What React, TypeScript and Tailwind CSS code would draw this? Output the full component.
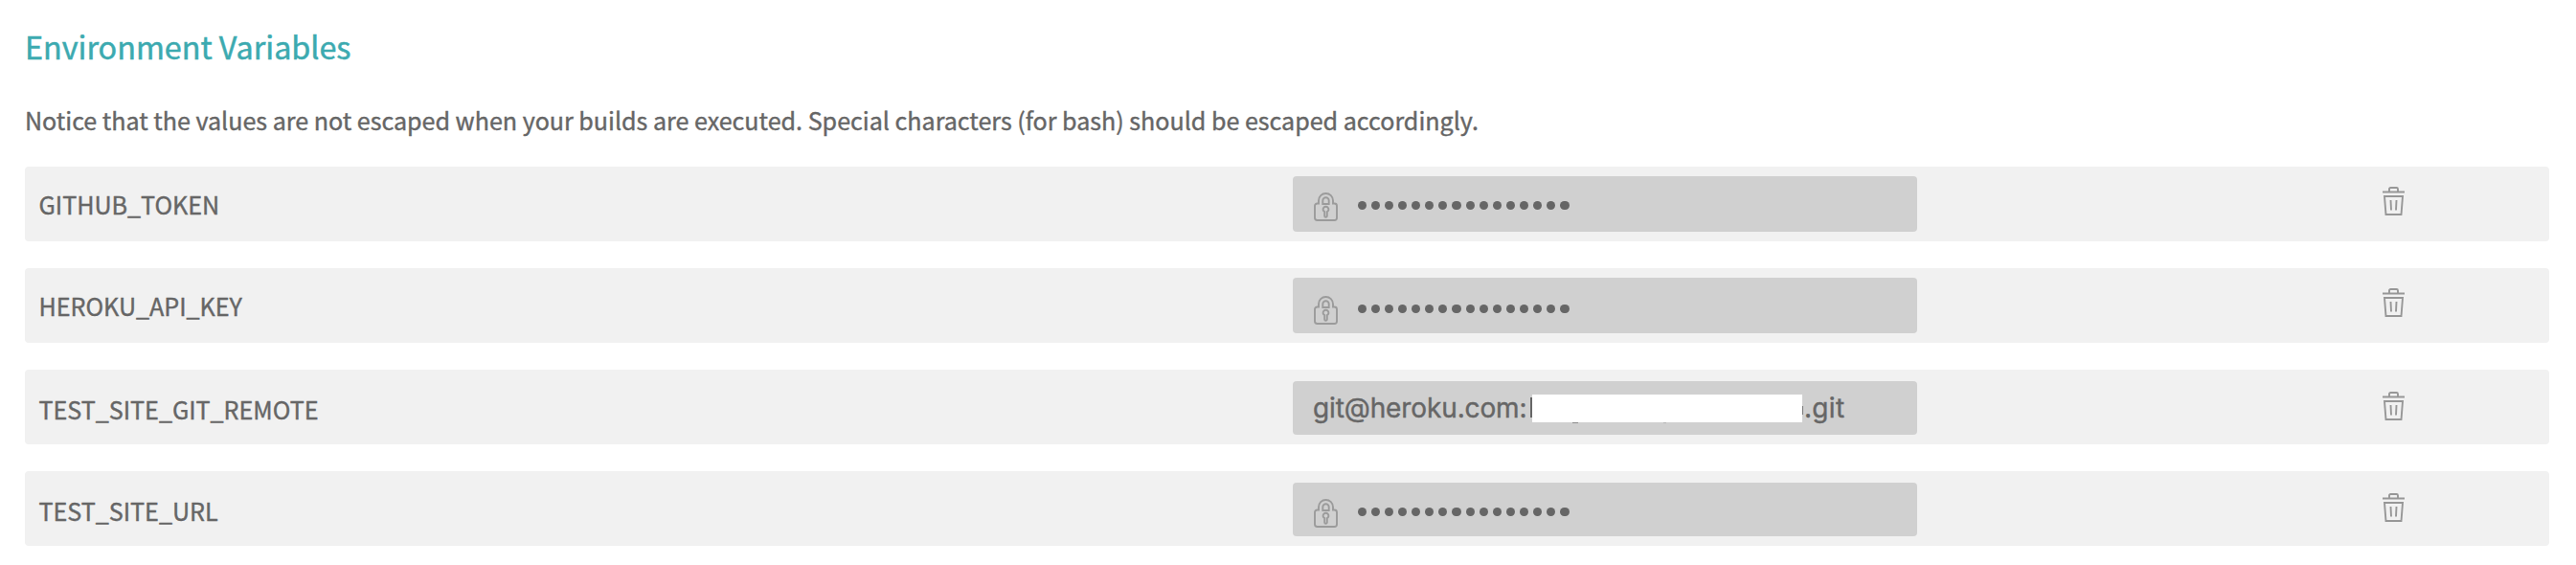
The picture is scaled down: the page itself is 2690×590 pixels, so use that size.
const variables = [
  { name: 'GITHUB_TOKEN', value: null, box: 'mt-[10px] h-[58px]', lock: 'mt-[17px]', dots: 'mt-[25.5px]', label: 'leading-[78px]', trash: 'mt-[21px]' },
  { name: 'HEROKU_API_KEY', value: null, box: 'mt-[10px] h-[58px]', lock: 'mt-[19px]', dots: 'mt-[27.5px]', label: 'leading-[78px]', trash: 'mt-[21px]' },
  { name: 'TEST_SITE_GIT_REMOTE', value: 'git@heroku.com:', suffix: '.git', box: 'mt-[12px] h-[56px]', lock: '', dots: '', label: 'leading-[82px]', trash: 'mt-[23px]' },
  { name: 'TEST_SITE_URL', value: null, box: 'mt-[12px] h-[56px]', lock: 'mt-[17px]', dots: 'mt-[25.5px]', label: 'leading-[82px]', trash: 'mt-[23px]' },
];

function LockIcon() {
  return (
    <svg width="25" height="30" viewBox="0 0 25 30" fill="none" stroke="#9b9b9b" strokeWidth="1.9">
      <path d="M3.5 11.5H5V8.5a7.5 7.5 0 0 1 15 0v3h1.5a2.5 2.5 0 0 1 2.5 2.5v12.5a2.5 2.5 0 0 1-2.5 2.5h-18A2.5 2.5 0 0 1 1 26.5V14a2.5 2.5 0 0 1 2.5-2.5Z" />
      <path d="M9.3 12V8.5a3.2 3.2 0 0 1 6.4 0V12Z" />
      <path d="M11.2 20.2a2.9 2.9 0 1 1 2.6 0v4.3a1.3 1.3 0 0 1-2.6 0Z" />
    </svg>
  );
}

function TrashIcon() {
  return (
    <svg width="23" height="30" viewBox="0 0 23 30" fill="none" stroke="#979797" strokeWidth="1.9">
      <path d="M0 5.5h23M7 5V2.5Q7 1 8.5 1h6Q16 1 16 2.5V5M2 10h19l-1.5 19h-16ZM8.5 14l.5 10.5M14.5 14l-.5 10.5" />
    </svg>
  );
}

function Dots() {
  return (
    <div className="flex gap-[5px]">
      {Array.from({ length: 16 }, (_, i) => (
        <span key={i} className="size-[9.125px] rounded-full bg-[#666]" />
      ))}
    </div>
  );
}

// White block over the private part of the value, with the edges of the covered letters
function Redacted() {
  return (
    <span className="relative h-[29px] w-[282px] bg-white">
      <span className="absolute top-[3px] -left-[2px] h-[21px] w-[2px] bg-[#666]" />
      <span className="absolute top-[29px] left-[42px] h-px w-[6px] bg-[#8a8a8a]" />
      <span className="absolute top-[29px] left-[137px] h-px w-[3px] bg-[#b5b5b5]" />
      <span className="absolute top-[12px] left-[282px] h-[9px] w-px bg-[#777]" />
    </span>
  );
}

export default function App() {
  return (
    <div className="h-[590px] bg-white pt-[24px] pr-[28px] pl-[26px] font-['Noto_Sans_CJK_SC',sans-serif] text-[#666]">
      <h2 className="h-[48px] text-[32.3px] leading-[48px] text-[#3caab0] [-webkit-text-stroke:0.5px_#3caab0]">Environment Variables</h2>
      <p className="mt-[33px] h-[40px] text-[25.07px] leading-[40px] [-webkit-text-stroke:0.4px_#666]">
        Notice that the values are not escaped when your builds are executed. Special characters (for bash) should be escaped accordingly.
      </p>
      <ul className="mt-[29px] flex flex-col gap-[28px]">
        {variables.map((item) => (
          <li key={item.name} className="flex h-[78px] items-start rounded bg-[#f1f1f1] pl-[14px]">
            <div className={`w-[1310px] pl-[0.5px] text-[25.1px] [-webkit-text-stroke:0.4px_#666] ${item.label}`}>{item.name}</div>
            <div className={`flex w-[652px] items-start rounded bg-[#d0d0d0] ${item.box}`}>
              {item.value ? (
                <div className="flex h-full items-center pl-[21px] font-[Inter,sans-serif] text-[28px] tracking-[-0.12px] [-webkit-text-stroke:0.4px_#666]">
                  <span className="w-[229px]">{item.value}</span>
                  <Redacted />
                  <span className="pl-[2px] tracking-[0.3px]">{item.suffix}</span>
                </div>
              ) : (
                <>
                  <div className={`ml-[22px] w-[45.5px] ${item.lock}`}>
                    <LockIcon />
                  </div>
                  <div className={item.dots}>
                    <Dots />
                  </div>
                </>
              )}
            </div>
            <div className={`ml-[486px] ${item.trash}`}>
              <TrashIcon />
            </div>
          </li>
        ))}
      </ul>
    </div>
  );
}
